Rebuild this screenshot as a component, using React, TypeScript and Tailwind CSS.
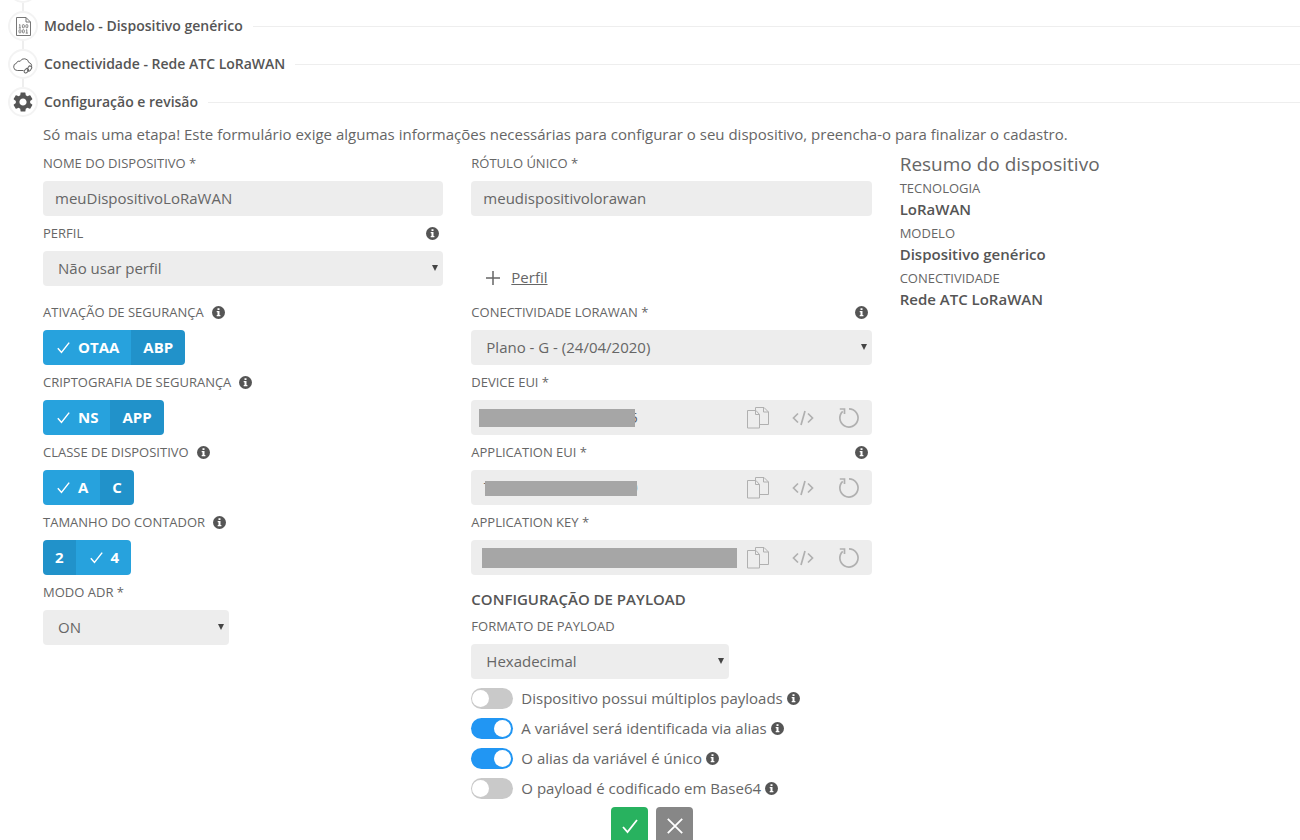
import React, { useId, useState } from "react";
import { MdSettings } from "react-icons/md";

const InfoIcon = () => (
  <svg viewBox="0 0 13 13" className="size-[13px] shrink-0" aria-hidden="true">
    <circle cx="6.5" cy="6.5" r="6.5" fill="#555" />
    <path
      d="M5.500 2.2h2v1.700h-2zM4.700 5h2.800v4.100h.9v1.200H4.700V9.100h.8V6.200h-.8z"
      fill="#fff"
    />
  </svg>
);

const CheckIcon = ({ className }: { className: string }) => (
  <svg
    viewBox="0 0 16 16"
    className={className}
    fill="none"
    stroke="currentColor"
    strokeWidth="1.8"
    aria-hidden="true"
  >
    <path d="M1 9l4.500 5L15 2" />
  </svg>
);

const CloseIcon = () => (
  <svg
    viewBox="0 0 16 16"
    className="size-4"
    fill="none"
    stroke="currentColor"
    strokeWidth="1.8"
    aria-hidden="true"
  >
    <path d="M.8.8l14.400 14.400M15.200.8L.8 15.200" />
  </svg>
);

const PlusIcon = () => (
  <svg
    viewBox="0 0 14 14"
    className="size-[14px]"
    fill="none"
    stroke="currentColor"
    strokeWidth="1.5"
    aria-hidden="true"
  >
    <path d="M7 0v14M0 7h14" />
  </svg>
);

const FileIcon = () => (
  <svg
    viewBox="0 0 15 19"
    className="h-[19px] w-[15px]"
    fill="none"
    stroke="#777"
    strokeWidth="1"
    aria-hidden="true"
  >
    <path d="M.5.5h9.500l4.500 4.500v13.500H.5zM10 .5V5h4.500" />
    <g strokeWidth=".9">
      <path d="M3 8.200l.9-.7v3.500M2.800 11h2.200" />
      <rect x="6.400" y="7.600" width="1.900" height="3.200" rx=".8" />
      <rect x="9.900" y="7.600" width="1.900" height="3.200" rx=".8" />
      <rect x="3" y="12.700" width="1.900" height="3.200" rx=".8" />
      <rect x="6.400" y="12.700" width="1.900" height="3.200" rx=".8" />
      <path d="M9.900 13.300l.9-.7v3.500M9.700 16.100h2.200" />
    </g>
  </svg>
);

const CloudIcon = () => (
  <svg
    viewBox="0 0 20 17"
    className="mt-[3px] h-[17px] w-5 shrink-0"
    fill="none"
    stroke="#666"
    strokeWidth="1"
    aria-hidden="true"
  >
    <path d="M10.500 13.500H4.300a3.700 3.700 0 0 1-.8-7.300 2.500 2.500 0 0 1 3.600-1.800A4.600 4.600 0 0 1 15.800 5.500a3.400 3.400 0 0 1 2.700 4.300" />
    <rect x="14.800" y="8.800" width="3.400" height="5.400" rx="1.700" transform="rotate(32 16.500 11.500)" />
    <rect x="11.800" y="11.200" width="3.200" height="5" rx="1.600" transform="rotate(42 13.400 13.700)" />
  </svg>
);

const CopyIcon = () => (
  <svg
    viewBox="0 0 22 22"
    className="ml-[2px] size-[22px]"
    fill="none"
    stroke="currentColor"
    strokeWidth="1"
    aria-hidden="true"
  >
    <path d="M.5 3.500h8.500l3.500 4v13.500H.5zM8.500 3.500v4h4" />
    <path d="M8.500 3.500v-3h8.500l4.500 4.500v12.500h-9M16.500.5v4.500h5" />
  </svg>
);

const CodeIcon = () => (
  <svg
    viewBox="0 0 22 16"
    className="h-4 w-[22px]"
    fill="none"
    stroke="currentColor"
    strokeWidth="1.7"
    aria-hidden="true"
  >
    <path d="M6 3.500L1.500 8 6 12.500M16 3.500L20.500 8 16 12.500M13 1L9 15" />
  </svg>
);

const RefreshIcon = () => (
  <svg
    viewBox="0 0 22 22"
    className="size-[22px]"
    fill="none"
    stroke="currentColor"
    strokeWidth="1.7"
    aria-hidden="true"
  >
    <path d="M11 1.800a9.100 9.100 0 1 1-6.300 2.500M1.800 2h4.700v5" />
  </svg>
);

interface StepProps {
  icon: React.ReactNode;
  title: string;
}

const Step = ({ icon, title }: StepProps) => (
  <li>
    <div className="ml-[22px] h-2 w-0.5 bg-[#eee]" />
    <div className="flex items-center">
      <span className="ml-2 flex size-[30px] shrink-0 items-center justify-center rounded-full border-2 border-[#f3f3f3]">
        {icon}
      </span>
      <h2 className="ml-[6px] mr-[10px] text-sm font-semibold text-[#555]">
        {title}
      </h2>
      <div className="h-px flex-1 bg-[#eee]" />
    </div>
  </li>
);

interface FieldLabelProps {
  htmlFor?: string;
  id?: string;
  children: React.ReactNode;
  info?: "near" | "far";
}

const FieldLabel = ({ htmlFor, id, children, info }: FieldLabelProps) => (
  <div
    className={
      info === "far"
        ? "flex h-[35px] items-center justify-between pr-1"
        : "flex h-[35px] items-center gap-2"
    }
  >
    <label htmlFor={htmlFor} id={id} className="text-[13px] uppercase">
      {children}
    </label>
    {info && <InfoIcon />}
  </div>
);

const TextField = ({ label, value }: { label: string; value: string }) => {
  const id = useId();
  return (
    <div>
      <FieldLabel htmlFor={id}>{label}</FieldLabel>
      <input
        id={id}
        type="text"
        defaultValue={value}
        className="h-[35px] w-full rounded bg-[#ededed] px-3 pb-px text-[15px]"
      />
    </div>
  );
};

interface SelectFieldProps {
  label: string;
  option: string;
  info?: "near" | "far";
  className?: string;
}

const SelectField = ({
  label,
  option,
  info,
  className = "w-full",
}: SelectFieldProps) => {
  const id = useId();
  return (
    <div>
      <FieldLabel htmlFor={id} info={info}>
        {label}
      </FieldLabel>
      <div className={`relative ${className}`}>
        <select
          id={id}
          className="h-[35px] w-full appearance-none rounded bg-[#ededed] px-[15px] text-[15px]"
        >
          <option>{option}</option>
        </select>
        <svg
          viewBox="0 0 6 6"
          className="pointer-events-none absolute right-[5px] top-[14px] size-[6px]"
          aria-hidden="true"
        >
          <path d="M0 0h6L3 6z" fill="#444" />
        </svg>
      </div>
    </div>
  );
};

interface ToggleFieldProps {
  label: string;
  options: string[];
  initial: string;
}

const ToggleField = ({ label, options, initial }: ToggleFieldProps) => {
  const [selected, setSelected] = useState(initial);
  const id = useId();
  return (
    <div>
      <FieldLabel id={id} info="near">
        {label}
      </FieldLabel>
      <div
        role="group"
        aria-labelledby={id}
        className="inline-flex h-[35px] overflow-hidden rounded align-top text-[15px] font-bold text-white"
      >
        {options.map((option) => (
          <button
            key={option}
            type="button"
            aria-pressed={option === selected}
            onClick={() => setSelected(option)}
            className={
              option === selected
                ? "flex items-center gap-2 bg-[#27a2dd] pl-[14px] pr-3"
                : "flex items-center bg-[#2192ca] px-3"
            }
          >
            {option === selected && <CheckIcon className="size-[13px]" />}
            {option}
          </button>
        ))}
      </div>
    </div>
  );
};

interface KeyFieldProps {
  label: string;
  value: string;
  maskClass: string;
  info?: "near" | "far";
}

const KeyField = ({ label, value, maskClass, info }: KeyFieldProps) => {
  const id = useId();
  return (
    <div>
      <FieldLabel htmlFor={id} info={info}>
        {label}
      </FieldLabel>
      <div className="relative flex h-[35px] rounded bg-[#ededed]">
        <input
          id={id}
          type="text"
          defaultValue={value}
          className="min-w-0 flex-1 bg-transparent pl-3 text-[15px]"
        />
        <div className={`absolute bg-[#a6a6a6] ${maskClass}`} />
        <div className="flex text-[#b0b0b0]">
          <button
            type="button"
            aria-label="Copiar"
            className="flex w-[46px] items-center justify-center"
          >
            <CopyIcon />
          </button>
          <button
            type="button"
            aria-label="Formato"
            className="flex w-[46px] items-center justify-center"
          >
            <CodeIcon />
          </button>
          <button
            type="button"
            aria-label="Gerar"
            className="flex w-[46px] items-center justify-center"
          >
            <RefreshIcon />
          </button>
        </div>
      </div>
    </div>
  );
};

const Switch = ({ label, checked }: { label: string; checked?: boolean }) => {
  const id = useId();
  return (
    <div className="flex h-[30px] items-center">
      <input
        id={id}
        type="checkbox"
        role="switch"
        defaultChecked={checked}
        className="relative h-[21px] w-[42px] shrink-0 appearance-none rounded-full bg-[#c9c9c9] before:absolute before:left-px before:top-[2px] before:size-[17px] before:rounded-full before:bg-white checked:bg-[#2196f3] checked:before:left-[23px]"
      />
      <label htmlFor={id} className="ml-2 mr-1 text-[15px]">
        {label}
      </label>
      <InfoIcon />
    </div>
  );
};

const summary = [
  { term: "Tecnologia", value: "LoRaWAN" },
  { term: "Modelo", value: "Dispositivo genérico" },
  { term: "Conectividade", value: "Rede ATC LoRaWAN" },
];

const App = () => {
  return (
    <form
      onSubmit={(e) => e.preventDefault()}
      className="bg-white font-['Open_Sans',sans-serif] text-[#666]"
    >
      <div className="flex h-[3px] items-end overflow-hidden pl-2">
        <span className="size-[30px] shrink-0 rounded-full border-2 border-[#f3f3f3]" />
      </div>
      <ol>
        <Step icon={<FileIcon />} title="Modelo - Dispositivo genérico" />
        <Step icon={<CloudIcon />} title="Conectividade - Rede ATC LoRaWAN" />
        <Step
          icon={<MdSettings className="size-6 shrink-0 text-[#555]" />}
          title="Configuração e revisão"
        />
      </ol>

      <div className="pl-[43px] pt-[5px]">
        <p className="text-[15px] leading-6">
          Só mais uma etapa! Este formulário exige algumas informações
          necessárias para configurar o seu dispositivo, preencha-o para
          finalizar o cadastro.
        </p>

        <div className="grid grid-cols-3 gap-7">
          <div>
            <TextField label="Nome do dispositivo *" value="meuDispositivoLoRaWAN" />
            <div className="h-[79px]">
              <SelectField label="Perfil" option="Não usar perfil" info="far" />
            </div>
            <ToggleField
              label="Ativação de segurança"
              options={["OTAA", "ABP"]}
              initial="OTAA"
            />
            <ToggleField
              label="Criptografia de segurança"
              options={["NS", "APP"]}
              initial="NS"
            />
            <ToggleField
              label="Classe de dispositivo"
              options={["A", "C"]}
              initial="A"
            />
            <ToggleField
              label="Tamanho do contador"
              options={["2", "4"]}
              initial="4"
            />
            <SelectField label="Modo ADR *" option="ON" className="w-[186px]" />
          </div>

          <div>
            <TextField label="Rótulo único *" value="meudispositivolorawan" />
            <div className="flex h-[79px] items-end">
              <a
                href="#perfil"
                className="flex h-[35px] items-center gap-[11px] pl-[15px] text-[15px]"
              >
                <PlusIcon />
                <span className="underline">Perfil</span>
              </a>
            </div>
            <SelectField
              label="Conectividade LoRaWAN *"
              option="Plano - G - (24/04/2020)"
              info="far"
            />
            <KeyField
              label="Device EUI *"
              value="000000000000000005"
              maskClass="left-2 top-[9px] h-[18px] w-[156px]"
            />
            <KeyField
              label="Application EUI *"
              value="700000000000000000"
              maskClass="left-[14px] top-[11px] h-[15px] w-[152px]"
              info="far"
            />
            <KeyField
              label="Application Key *"
              value=""
              maskClass="left-[11px] top-2 h-5 w-[255px]"
            />

            <h3 className="pt-[14px] text-[15px] font-semibold uppercase leading-5 text-[#555]">
              Configuração de payload
            </h3>
            <SelectField
              label="Formato de payload"
              option="Hexadecimal"
              className="w-[258px]"
            />
            <div className="pt-1">
              <Switch label="Dispositivo possui múltiplos payloads" />
              <Switch label="A variável será identificada via alias" checked />
              <Switch label="O alias da variável é único" checked />
              <Switch label="O payload é codificado em Base64" />
            </div>
          </div>

          <div className="pt-[6px]">
            <h3 className="text-[19px] leading-6">Resumo do dispositivo</h3>
            <dl>
              {summary.map(({ term, value }) => (
                <div key={term} className="h-[45px]">
                  <dt className="text-[13px] uppercase leading-6">{term}</dt>
                  <dd className="text-[15px] font-semibold leading-[18px] text-[#555]">
                    {value}
                  </dd>
                </div>
              ))}
            </dl>
          </div>
        </div>
      </div>

      <div className="flex justify-center gap-2 pl-1 pt-1">
        <button
          type="submit"
          aria-label="Salvar"
          className="flex size-[37px] items-center justify-center rounded-sm bg-[#28b25f] text-white"
        >
          <CheckIcon className="size-4" />
        </button>
        <button
          type="button"
          aria-label="Cancelar"
          className="flex size-[37px] items-center justify-center rounded-sm bg-[#878787] text-white"
        >
          <CloseIcon />
        </button>
      </div>
    </form>
  );
};

export default App;
